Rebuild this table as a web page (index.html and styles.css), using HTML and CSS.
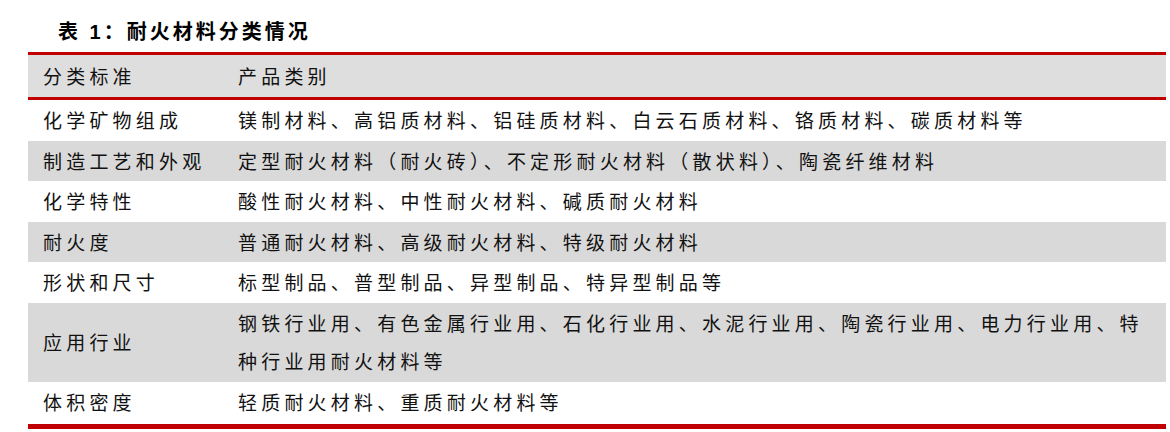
FILE: index.html
```html
<!DOCTYPE html>
<html lang="zh-CN">
<head>
<meta charset="utf-8">
<link rel="stylesheet" href="styles.css">
</head>
<body>
<div class="title">表 1：耐火材料分类情况</div>
<table class="tbl">
  <thead>
    <tr><th class="c1">分类标准</th><th class="c2">产品类别</th></tr>
  </thead>
  <tbody>
    <tr><td>化学矿物组成</td><td>镁制材料、高铝质材料、铝硅质材料、白云石质材料、铬质材料、碳质材料等</td></tr>
    <tr class="g"><td>制造工艺和外观</td><td>定型耐火材料（耐火砖）、不定形耐火材料（散状料）、陶瓷纤维材料</td></tr>
    <tr><td>化学特性</td><td>酸性耐火材料、中性耐火材料、碱质耐火材料</td></tr>
    <tr class="g"><td>耐火度</td><td>普通耐火材料、高级耐火材料、特级耐火材料</td></tr>
    <tr><td>形状和尺寸</td><td>标型制品、普型制品、异型制品、特异型制品等</td></tr>
    <tr class="g"><td>应用行业</td><td>钢铁行业用、有色金属行业用、石化行业用、水泥行业用、陶瓷行业用、电力行业用、特<br>种行业用耐火材料等</td></tr>
    <tr class="last"><td>体积密度</td><td>轻质耐火材料、重质耐火材料等</td></tr>
  </tbody>
</table>
</body>
</html>
```
FILE: styles.css
```css
html, body {
  margin: 0;
  padding: 0;
  background: #ffffff;
}
body {
  font-family: "Liberation Serif", "Noto Sans CJK SC", serif;
  color: #111111;
  width: 1170px;
  height: 432px;
  overflow: hidden;
}
.title {
  font-family: "Liberation Sans", "Noto Sans CJK SC", sans-serif;
  font-weight: bold;
  font-size: 20px;
  letter-spacing: 3px;
  line-height: 24px;
  padding: 20px 0 8px 58px;
  color: #000;
}
.tbl {
  margin-left: 28px;
  width: 1138px;
  border-collapse: collapse;
  font-family: "Noto Sans CJK SC", sans-serif;
  font-size: 19px;
  letter-spacing: 4.2px;
}
.tbl thead tr {
  background: #dedede;
  border-top: 3px solid #c00000;
  border-bottom: 3px solid #c00000;
}
.tbl th {
  font-weight: normal;
  text-align: left;
  padding: 2px 0 2px 15px;
  line-height: 38px;
}
.tbl th.c1 { width: 180px; }
.tbl td {
  padding: 1px 0 1px 15px;
  line-height: 38.5px;
  vertical-align: middle;
}
.tbl tr.g { background: #d9d9d9; }
.tbl tr.last td { padding-bottom: 3px; }
.tbl tbody tr.last { border-bottom: 5px solid #c00000; }
```
